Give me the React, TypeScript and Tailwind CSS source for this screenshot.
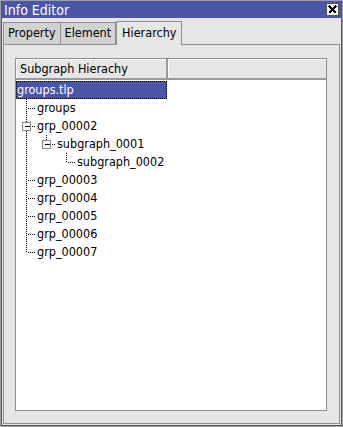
import React from 'react';

type Row = {
  label: string;
  level: number;
  guides: boolean[];
  last?: boolean;
  expander?: boolean;
  selected?: boolean;
};

const rows: Row[] = [
  { label: 'groups.tlp', level: 0, guides: [], selected: true },
  { label: 'groups', level: 1, guides: [] },
  { label: 'grp_00002', level: 1, guides: [], expander: true },
  { label: 'subgraph_0001', level: 2, guides: [true], last: true, expander: true },
  { label: 'subgraph_0002', level: 3, guides: [true, false], last: true },
  { label: 'grp_00003', level: 1, guides: [] },
  { label: 'grp_00004', level: 1, guides: [] },
  { label: 'grp_00005', level: 1, guides: [] },
  { label: 'grp_00006', level: 1, guides: [] },
  { label: 'grp_00007', level: 1, guides: [], last: true },
];

// dotted tree guides drawn per row
function Guides({ row }: { row: Row }) {
  if (row.level === 0) return null;
  const w = row.level * 20;
  const cx = (row.level - 1) * 20 + 9.5;
  return (
    <svg width={w} height={18} className="shrink-0" shapeRendering="crispEdges">
      {row.guides.map((on, i) =>
        on ? (
          <line key={i} x1={i * 20 + 9.5} y1={0} x2={i * 20 + 9.5} y2={18} stroke="#000" strokeDasharray="1 1" />
        ) : null
      )}
      <line x1={cx} y1={0} x2={cx} y2={row.last ? 9 : 18} stroke="#000" strokeDasharray="1 1" />
      <line x1={cx + 1} y1={9.5} x2={w - 1} y2={9.5} stroke="#000" strokeDasharray="1 1" />
      {row.expander && (
        <g>
          <rect x={cx - 4} y={5.5} width={8} height={8} fill="#fff" stroke="#8c8c8c" />
          <line x1={cx - 2} y1={9.5} x2={cx + 3} y2={9.5} stroke="#000" />
        </g>
      )}
    </svg>
  );
}

function Tab({ label, active }: { label: string; active?: boolean }) {
  return active ? (
    <div className="h-[24px] px-[5px] flex items-center bg-[#e6e6e6] border-t border-l border-r border-[#8e8e8e] -mb-px relative z-10">
      {label}
    </div>
  ) : (
    <div className="h-[22px] px-[4px] flex items-center bg-[#d2d2d2] border-t border-l border-[#8e8e8e] last:border-r">
      {label}
    </div>
  );
}

export default function App() {
  return (
    <div className="w-[343px] h-[427px] bg-[#e6e6e6] border border-[#a0a0a0] flex flex-col overflow-hidden font-['DejaVu_Sans_Condensed','DejaVu_Sans',sans-serif] [font-stretch:condensed] text-[12.5px] text-black">
      {/* title bar */}
      <div className="h-[17px] shrink-0 bg-[#4a55a7] flex items-center justify-between pl-[3px] pr-[3px]">
        <span className="text-white text-[14px] leading-none">Info Editor</span>
        <div className="w-[13px] h-[13px] bg-[#f0f0f0] border border-[#555] flex items-center justify-center">
          <svg width="9" height="9" viewBox="0 0 9 9" shapeRendering="crispEdges">
            <path d="M1 1 L8 8 M8 1 L1 8" stroke="#000" strokeWidth="1.6" />
          </svg>
        </div>
      </div>

      <div className="flex-1 flex flex-col border-l border-r border-b border-[#555] px-px pb-px">
        {/* tabs */}
        <div className="flex items-end h-[26px]">
          <div className="flex items-end">
            <Tab label="Property" />
            <Tab label="Element" />
          </div>
          <Tab label="Hierarchy" active />
        </div>

        {/* tab panel */}
        <div className="flex-1 border border-[#8e8e8e] pt-[13px] pl-[11px] pr-[12px] pb-[12px] flex">
          <div className="flex-1 bg-white border border-[#8e8e8e] flex flex-col">
            {/* header */}
            <div className="flex h-[21px] bg-[#e6e6e6] border-b-2 border-[#9a9a9a]">
              <div className="w-[150px] border-t border-l border-white pl-[3px] flex items-center">
                Subgraph Hierachy
              </div>
              <div className="w-[2px] bg-[#9a9a9a]" />
              <div className="flex-1 border-t border-l border-white" />
            </div>

            <div className="flex flex-col pt-px">
              {rows.map((row) => (
                <div key={row.label} className="h-[18px] flex items-center">
                  {row.selected ? (
                    <div className="w-[151px] h-[18px] bg-[#4a55a7] text-white outline-1 outline-dotted outline-black -outline-offset-1 pl-px flex items-center">
                      {row.label}
                    </div>
                  ) : (
                    <>
                      <div className="pl-px flex">
                        <Guides row={row} />
                      </div>
                      <span>{row.label}</span>
                    </>
                  )}
                </div>
              ))}
            </div>
          </div>
        </div>
      </div>
    </div>
  );
}
